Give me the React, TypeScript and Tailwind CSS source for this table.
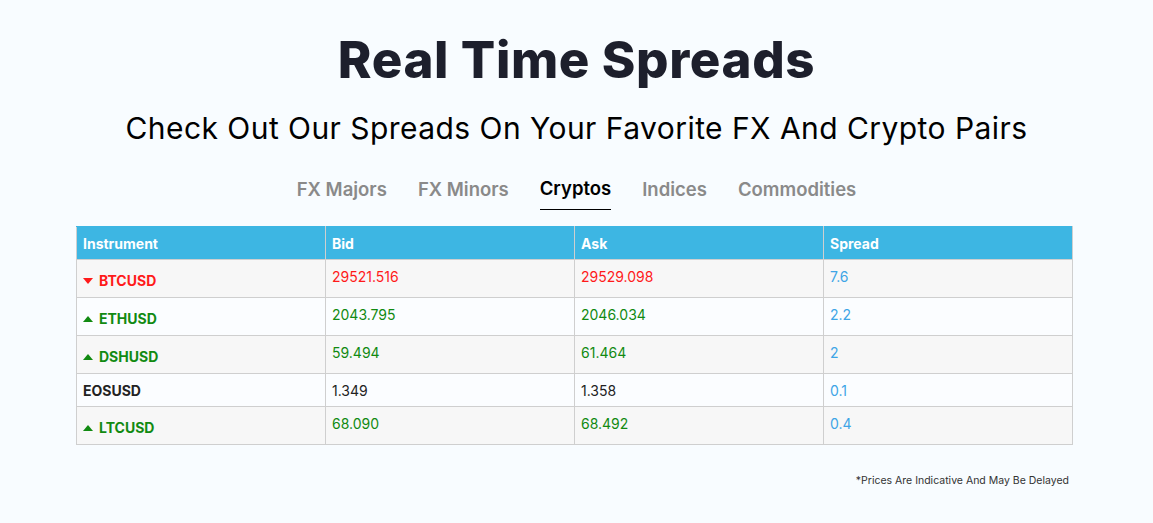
import { useState } from 'react';

type Row = {
    symbol: string;
    bid: string;
    ask: string;
    spread: string;
    dir: 'up' | 'down' | 'none';
};

const rows: Row[] = [
    { symbol: 'BTCUSD', bid: '29521.516', ask: '29529.098', spread: '7.6', dir: 'down' },
    { symbol: 'ETHUSD', bid: '2043.795', ask: '2046.034', spread: '2.2', dir: 'up' },
    { symbol: 'DSHUSD', bid: '59.494', ask: '61.464', spread: '2', dir: 'up' },
    { symbol: 'EOSUSD', bid: '1.349', ask: '1.358', spread: '0.1', dir: 'none' },
    { symbol: 'LTCUSD', bid: '68.090', ask: '68.492', spread: '0.4', dir: 'up' },
];

const tabs = ['FX Majors', 'FX Minors', 'Cryptos', 'Indices', 'Commodities'];

function Arrow({ dir }: { dir: 'up' | 'down' }) {
    return (
        <svg width="10" height="6" viewBox="0 0 10 6" className="mr-[6px] shrink-0">
            {dir === 'up' ? (
                <path d="M0 6 L5 0 L10 6 Z" fill="#118a11" />
            ) : (
                <path d="M0 0 L10 0 L5 6 Z" fill="#ff1a1a" />
            )}
        </svg>
    );
}

export default function App() {
    const [active, setActive] = useState('Cryptos');
    return (
        <div className="min-h-screen bg-[#f8fcff] pt-[28px] font-['Inter',sans-serif]">
            <h1 className="text-center text-[51px] leading-[64px] font-extrabold tracking-[0.6px] text-[#1d1f2c]">
                Real Time Spreads
            </h1>
            <p className="mt-[16px] text-center text-[30px] leading-[40px] tracking-[0.45px] text-black">
                Check Out Our Spreads On Your Favorite FX And Crypto Pairs
            </p>
            <div className="mt-[27px] flex justify-center gap-[31px]">
                {tabs.map((tab) => (
                    <button
                        key={tab}
                        onClick={() => setActive(tab)}
                        className={
                            tab === active
                                ? 'border-b-[1.5px] border-black pb-[8px] text-[18.5px] leading-[26px] font-semibold text-black'
                                : 'pb-[8px] text-[18.5px] leading-[26px] font-semibold text-[#8a8a8a]'
                        }
                    >
                        {tab}
                    </button>
                ))}
            </div>
            <div className="ml-[76px] mt-[16px] w-[997px]">
                <table className="w-full table-fixed border-collapse text-[14px]">
                    <thead>
                        <tr className="bg-[#3db6e3] text-left text-white">
                            {['Instrument', 'Bid', 'Ask', 'Spread'].map((h) => (
                                <th
                                    key={h}
                                    className="h-[33px] border border-[#cfcfcf] border-t-[#3db6e3] px-[6px] align-middle font-bold"
                                >
                                    {h}
                                </th>
                            ))}
                        </tr>
                    </thead>
                    <tbody>
                        {rows.map((row, i) => {
                            const color =
                                row.dir === 'up'
                                    ? 'text-[#118a11]'
                                    : row.dir === 'down'
                                      ? 'text-[#ff1a1a]'
                                      : 'text-[#222]';
                            return (
                                <tr
                                    key={row.symbol}
                                    className={i % 2 === 0 ? 'bg-[#f7f7f7]' : 'bg-[#fbfdff]'}
                                >
                                    <td
                                        className={`border border-[#cfcfcf] px-[6px] align-top font-bold ${color} ${
                                            row.dir === 'none' ? 'pt-[7px] pb-[5px]' : 'pt-[11px] pb-[6px]'
                                        }`}
                                    >
                                        <span className="flex items-center leading-[20px]">
                                            {row.dir !== 'none' && <Arrow dir={row.dir} />}
                                            {row.symbol}
                                        </span>
                                    </td>
                                    <td className={`border border-[#cfcfcf] px-[6px] pt-[7px] align-top leading-[20px] ${color}`}>
                                        {row.bid}
                                    </td>
                                    <td className={`border border-[#cfcfcf] px-[6px] pt-[7px] align-top leading-[20px] ${color}`}>
                                        {row.ask}
                                    </td>
                                    <td className="border border-[#cfcfcf] px-[6px] pt-[7px] align-top leading-[20px] text-[#3ea5e6]">
                                        {row.spread}
                                    </td>
                                </tr>
                            );
                        })}
                    </tbody>
                </table>
                <p className="mt-[29px] pr-[4px] text-right text-[10.5px] leading-[14px] text-[#333]">
                    *Prices Are Indicative And May Be Delayed
                </p>
            </div>
        </div>
    );
}
